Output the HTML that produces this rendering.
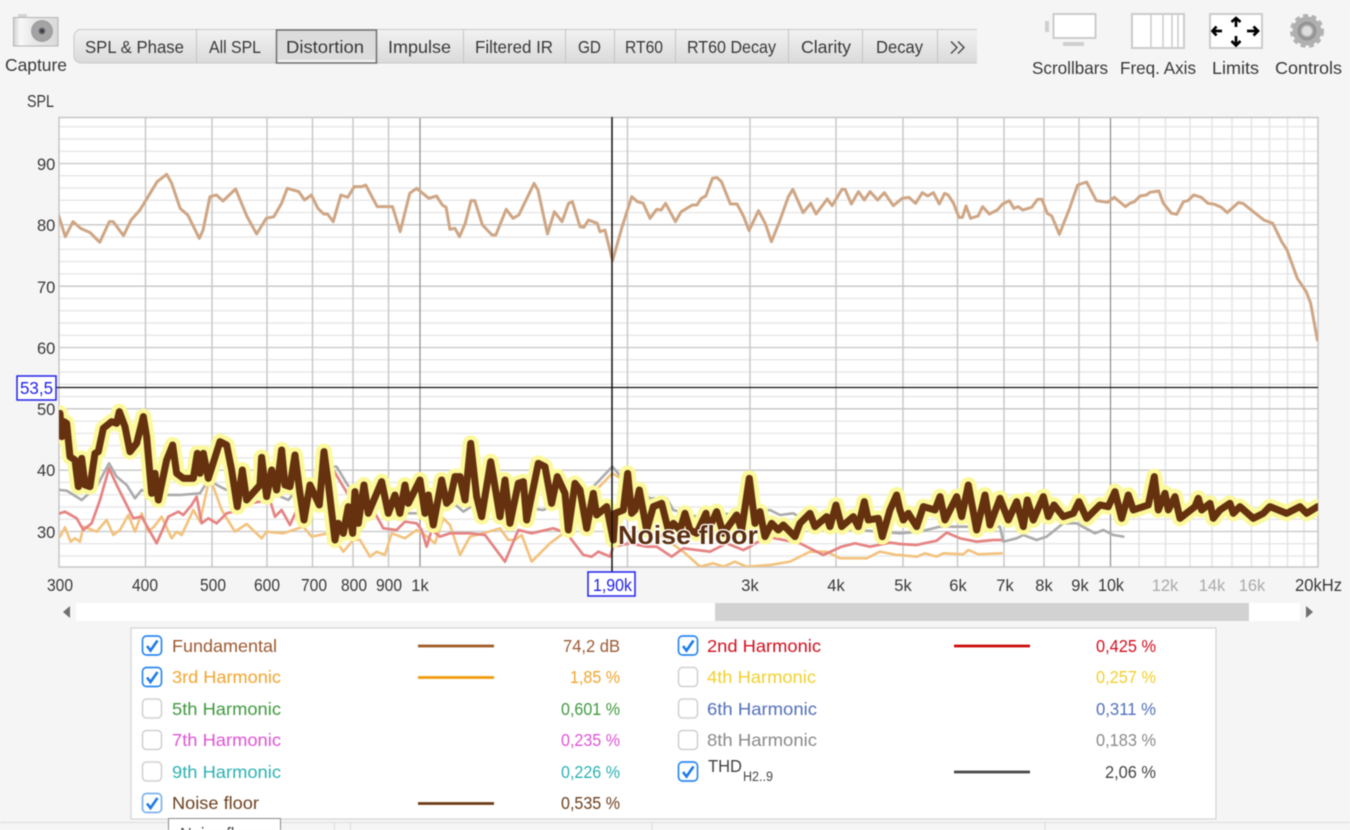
<!DOCTYPE html>
<html><head><meta charset="utf-8"><style>
html,body{margin:0;padding:0;background:#f5f5f5;width:1350px;height:830px;overflow:hidden}
svg{display:block;filter:blur(.5px)}
text{font-family:"Liberation Sans",sans-serif;font-size:16.5px;fill:#383838}
text[textLength]{font-size:17.5px}
.c{text-anchor:middle}
.n{vector-effect:non-scaling-stroke;fill:none;stroke-linejoin:round;stroke-linecap:round}
</style></head><body>
<svg width="1350" height="830" viewBox="0 0 1350 830" xmlns="http://www.w3.org/2000/svg">
<defs>
<linearGradient id="tab" x1="0" y1="0" x2="0" y2="1"><stop offset="0" stop-color="#f2f2f2"/><stop offset="1" stop-color="#dadada"/></linearGradient>
<linearGradient id="cam" x1="0" y1="0" x2="1" y2="0"><stop offset="0" stop-color="#d0d0d0"/><stop offset=".15" stop-color="#f8f8f8"/><stop offset=".45" stop-color="#e8e8e8"/><stop offset="1" stop-color="#dadada"/></linearGradient>
<radialGradient id="lens"><stop offset="0" stop-color="#2d2d35"/><stop offset=".18" stop-color="#50515a"/><stop offset=".38" stop-color="#a6a6a6"/><stop offset="1" stop-color="#a0a0a0"/></radialGradient>
<clipPath id="plot"><rect x="59" y="117" width="1259" height="450"/></clipPath>
<g id="noise">
<polyline class="n" transform="translate(0,370) scale(.3333)" points="180,130 185,200 192,155 200,160 210,260 225,270 235,350 245,265 255,345 270,350 285,250 295,245 310,175 335,155 350,160 358,125 375,170 390,245 410,220 430,140 440,200 455,370 465,310 475,390 500,270 518,225 530,310 550,325 580,325 592,250 600,310 610,250 625,325 660,215 680,225 695,300 712,410 727,300 740,390 780,345 785,262 800,380 815,300 830,360 845,240 855,345 870,350 885,255 900,370 912,450 930,345 958,405 972,245 985,340 1005,510 1015,460 1030,490 1045,410 1058,490 1065,365 1075,460 1092,345 1105,430 1145,335 1165,430 1185,375 1200,430 1215,345 1225,400 1260,330 1275,430 1285,375 1300,465 1325,330 1340,400 1350,390"/>
<polyline class="n" transform="translate(450,370) scale(.3333)" points="0,390 15,320 30,320 45,390 62,220 80,380 95,440 122,275 130,320 150,440 165,330 180,460 205,340 220,335 230,450 265,280 285,290 305,400 322,320 345,370 355,480 375,340 390,360 410,475 430,370 440,435 470,410 490,510 495,430 520,420 533,310 545,430 555,420 568,360 590,480 610,410 635,400 655,480 670,460 690,480 705,430 720,480 740,490 768,430 775,480 800,425 820,490 860,435 875,480 898,325 915,460 930,425 945,500 965,460 985,480 1000,465 1035,500 1050,460 1080,430 1095,470 1130,440 1140,470 1158,405 1175,470 1210,440 1225,470 1243,395 1255,450 1285,445 1297,500 1320,420 1340,375 1350,420"/>
<polyline class="n" transform="translate(900,370) scale(.3333)" points="0,420 10,450 25,430 50,470 70,410 105,420 120,380 135,450 170,380 185,440 205,345 230,480 255,375 270,465 300,385 325,450 350,395 370,470 382,390 400,450 430,380 445,440 462,405 490,440 520,430 537,395 560,445 600,405 625,410 645,365 665,445 685,375 700,420 745,405 763,320 775,420 795,370 805,420 825,380 840,445 885,410 895,385 905,420 930,400 940,445 960,420 990,400 1000,430 1020,410 1060,445 1090,430 1110,410 1160,430 1200,410 1220,430 1253,410"/>
</g>
</defs>

<rect width="1350" height="830" fill="#f5f5f5"/>

<!-- camera -->
<rect x="18" y="14" width="9" height="4" fill="#d4d4d4"/>
<rect x="13.5" y="17.5" width="44.5" height="28.5" fill="url(#cam)" stroke="#b4b4b4"/>
<circle cx="42" cy="31" r="11" fill="url(#lens)"/>
<text x="5" y="71" textLength="62" lengthAdjust="spacingAndGlyphs">Capture</text>

<!-- tabs -->
<path d="M977 29.500H81a7 7 0 0 0-7 7V56a7 7 0 0 0 7 7H977" fill="url(#tab)" stroke="#c8c8c8"/>
<rect x="276.500" y="30" width="100" height="33" fill="#dcdcdc" stroke="#707070" stroke-width="1.5"/>
<rect x="278" y="60" width="97" height="2" fill="#f5f5f5"/>
<path d="M196.500 30V63M463.500 30V63M565.500 30V63M614.500 30V63M675.500 30V63M788.500 30V63M862.500 30V63M937.500 30V63" stroke="#c4c4c4" fill="none"/>
<text x="85" y="53" textLength="99" lengthAdjust="spacingAndGlyphs">SPL &amp; Phase</text>
<text x="209" y="53" textLength="52" lengthAdjust="spacingAndGlyphs">All SPL</text>
<text x="286" y="53" textLength="78" lengthAdjust="spacingAndGlyphs">Distortion</text>
<text x="388" y="53" textLength="63" lengthAdjust="spacingAndGlyphs">Impulse</text>
<text x="475" y="53" textLength="78" lengthAdjust="spacingAndGlyphs">Filtered IR</text>
<text x="578" y="53" textLength="23" lengthAdjust="spacingAndGlyphs">GD</text>
<text x="625" y="53" textLength="38" lengthAdjust="spacingAndGlyphs">RT60</text>
<text x="687" y="53" textLength="89" lengthAdjust="spacingAndGlyphs">RT60 Decay</text>
<text x="801" y="53" textLength="50" lengthAdjust="spacingAndGlyphs">Clarity</text>
<text x="876" y="53" textLength="47" lengthAdjust="spacingAndGlyphs">Decay</text>
<path d="M951 41.500l6 6-6 6M958 41.500l6 6-6 6" fill="none" stroke="#444" stroke-width="1.400"/>

<!-- right icons -->
<rect x="1045" y="21" width="4" height="11" fill="#cfcfcf"/>
<rect x="1053.500" y="14" width="42" height="24" fill="#fff" stroke="#ccc" stroke-width="2"/>
<rect x="1063" y="42" width="21" height="4" fill="#cfcfcf"/>
<rect x="1132" y="14" width="52" height="34" fill="#fff" stroke="#ccc" stroke-width="2"/>
<path d="M1151 14V48M1163 14V48M1172 14V48M1178 14V48" stroke="#ccc" stroke-width="1.500"/>
<rect x="1210" y="14" width="52" height="34" fill="#fff" stroke="#ccc" stroke-width="2"/>
<g stroke="#000" stroke-width="2.700" fill="none">
<path d="M1213 31H1222M1216.500 26.500L1212.500 31L1216.500 35.500"/>
<path d="M1247 31H1257M1253.500 26.500L1258 31L1253.500 35.500"/>
<path d="M1236 18V27M1231.500 22L1236 18L1240.500 22"/>
<path d="M1236 36V45M1231.500 41L1236 45.500L1240.500 41"/>
</g>
<circle cx="1307" cy="31" r="14.500" fill="#b0b0b0"/>
<circle cx="1307" cy="31" r="15.500" fill="none" stroke="#b2b2b2" stroke-width="3" stroke-dasharray="5 3.620"/>
<circle cx="1307" cy="31" r="8" fill="none" stroke="#949494" stroke-width="3"/>
<circle cx="1307" cy="31" r="5" fill="#dedede"/>
<text x="1032" y="74" textLength="76" lengthAdjust="spacingAndGlyphs">Scrollbars</text>
<text x="1120" y="74" textLength="76" lengthAdjust="spacingAndGlyphs">Freq. Axis</text>
<text x="1212" y="74" textLength="47" lengthAdjust="spacingAndGlyphs">Limits</text>
<text x="1275" y="74" textLength="67" lengthAdjust="spacingAndGlyphs">Controls</text>

<text x="27" y="107" textLength="27" lengthAdjust="spacingAndGlyphs">SPL</text>

<!-- plot -->
<rect x="59" y="117" width="1259" height="450" fill="#fff"/>
<path stroke="#e9e9e9" stroke-width="1.500" fill="none" d="M59 126.700H1318M59 139H1318M59 151.200H1318M59 175.800H1318M59 188H1318M59 200.300H1318M59 212.600H1318M59 237.100H1318M59 249.400H1318M59 261.600H1318M59 273.900H1318M59 298.400H1318M59 310.700H1318M59 323H1318M59 335.200H1318M59 359.800H1318M59 372H1318M59 384.300H1318M59 396.600H1318M59 421.100H1318M59 433.400H1318M59 445.600H1318M59 457.900H1318M59 482.400H1318M59 494.700H1318M59 507H1318M59 519.200H1318M59 543.800H1318M59 556H1318"/>
<path stroke="#e4e4e4" stroke-width="1.500" fill="none" d="M1139 117V567M1165.500 117V567M1190 117V567M1212 117V567M1232 117V567M1251.500 117V567M1269.500 117V567M1287.500 117V567M1304 117V567"/>
<path stroke="#c6c6c6" stroke-width="1.300" fill="none" d="M59 163.500H1318M59 224.800H1318M59 286.200H1318M59 347.500H1318M59 408.800H1318M59 470.200H1318M59 531.500H1318"/>
<path stroke="#c6c6c6" stroke-width="1.400" fill="none" d="M145.500 117V567M212 117V567M267 117V567M312.500 117V567M353 117V567M388.500 117V567M627.500 117V567M750 117V567M836 117V567M903 117V567M957.500 117V567M1004 117V567M1044 117V567M1079 117V567"/>
<path stroke="#8c8c8c" stroke-width="1.200" fill="none" d="M420 117V567M1110.500 117V567"/>
<rect x="59" y="117.500" width="1259" height="449.500" fill="none" stroke="#c6c6c6" stroke-width="1.500"/>

<g clip-path="url(#plot)">
<!-- fundamental -->
<g stroke="#cfa685" stroke-width="3">
<polyline class="n" transform="translate(50,110) scale(.3827,.3333)" points="22,315 40,380 60,335 80,355 105,368 130,397 155,335 165,335 192,377 212,330 235,300 280,215 305,193 318,220 340,295 360,315 390,385 400,360 418,260 435,255 452,273 485,237 515,320 540,372 565,325 585,320 605,280 620,235 650,245 665,270 683,255 700,295 715,312 725,312 740,335 760,255 778,262 795,230 815,230 825,225 855,290 895,290 915,365 940,250 958,235 990,265 1010,258 1025,285 1035,292 1045,358 1058,355 1070,380 1085,340 1100,272 1110,272 1130,345 1155,375 1165,375 1192,298 1210,325 1225,315 1265,220 1275,240 1300,372 1318,305 1338,335 1355,280 1365,275 1385,350 1395,352 1407,330 1430,340 1437,365 1450,360 1470,452 1495,350 1520,260 1535,275 1550,280 1568,325"/>
<polyline class="n" transform="translate(650,110) scale(.4464,.3333)" points="0,325 15,298 25,300 35,280 57,335 70,305 95,285 105,285 115,265 125,258 140,205 150,203 160,215 180,282 195,282 210,320 222,362 243,302 258,340 272,395 290,335 310,260 320,238 343,308 360,280 372,312 397,267 408,287 430,238 437,238 451,282 467,245 480,270 493,245 510,270 525,248 545,287 565,265 580,262 595,280 610,248 622,258 635,248 648,282 660,250 668,255 680,280 692,322 700,322 708,288 718,325 735,318 745,290 760,312 778,300 790,282 805,272 815,295 825,290 835,300 855,292 868,268 878,268 890,310 900,318 917,373 940,295 958,225 978,216 1000,272 1025,277 1040,262 1065,290 1075,280 1085,275 1098,258 1112,255 1120,247 1140,243 1150,280 1168,310 1180,313 1195,275 1205,272 1218,255 1235,262 1250,280 1265,283 1280,292 1293,308 1318,278 1328,280 1375,330 1395,340 1415,395 1427,420 1450,505 1470,545 1480,580 1495,690"/>
</g>
<!-- orange -->
<g stroke="#f3c27d" stroke-width="2.600">
<polyline class="n" transform="translate(0,370) scale(.3333)" points="180,500 195,472 212,515 225,505 240,515 250,470 290,485 320,450 340,495 360,480 385,435 405,485 425,430 445,485 462,470 485,440 515,505 530,485 545,495 580,420 600,455 625,340 640,350 665,420 705,485 740,462 785,505 800,485 850,490 910,470 935,500 985,490 1000,500 1030,545 1060,510 1080,510 1110,560 1130,545 1155,555 1175,490 1215,505 1250,480 1275,495 1305,520 1330,445 1350,465"/>
<polyline class="n" transform="translate(450,370) scale(.3333)" points="0,465 30,555 60,500 100,490 150,475 175,510 195,510 215,495 245,575 300,520 340,490 370,450 400,400 487,310 520,330 600,470 650,510 700,545 750,590 790,580 820,590 855,575 890,590 960,585 1020,575 1080,545 1130,545 1170,565 1250,565 1290,545 1340,555 1350,555"/>
<polyline class="n" transform="translate(900,370) scale(.3333)" points="0,555 50,560 75,550 110,560 130,550 190,553 205,540 235,553 305,550"/>
</g>
<!-- red -->
<g stroke="#e58383" stroke-width="2.700">
<polyline class="n" transform="translate(0,370) scale(.3333)" points="180,430 195,425 230,445 250,480 275,460 300,390 327,295 350,345 375,395 400,445 425,440 470,520 505,440 535,425 550,435 575,405 590,380 605,460 625,445 650,460 680,430 700,425 750,400 810,390 825,440 845,420 870,465 890,420 950,370 1000,300 1030,350 1060,400 1120,420 1150,475 1190,480 1215,455 1250,460 1265,480 1280,530 1295,480 1320,500 1350,490"/>
<polyline class="n" transform="translate(450,370) scale(.3333)" points="0,490 20,490 60,490 105,495 165,575 205,480 245,490 310,475 350,490 400,555 425,560 445,545 480,560 490,530 540,520 590,530 620,530 665,560 700,535 780,545 830,520 880,540 900,530 950,500 1000,510 1050,520 1120,555 1175,530 1215,520 1260,530 1320,518 1350,522"/>
<polyline class="n" transform="translate(900,370) scale(.3333)" points="0,522 50,525 110,512 140,488 180,505 230,515 280,510 305,510"/>
</g>
<!-- grey -->
<g stroke="#ababab" stroke-width="2.600">
<polyline class="n" transform="translate(0,370) scale(.3333)" points="180,360 200,362 245,390 290,350 327,280 350,320 380,345 405,385 425,360 440,365 470,375 510,375 540,375 600,370 625,330 660,350 690,365 712,400 770,380 830,375 865,390 890,360 950,320 990,290 1010,290 1040,340 1080,400 1130,400 1165,430 1250,430 1350,400"/>
<polyline class="n" transform="translate(450,370) scale(.3333)" points="0,390 40,425 80,400 200,410 280,420 300,410 350,400 430,350 487,290 530,340 600,385 650,385 670,420 740,440 850,430 960,420 990,435 1030,430 1100,470 1350,490"/>
<polyline class="n" transform="translate(900,370) scale(.3333)" points="0,490 60,485 120,470 170,470 300,470 310,515 350,505 370,495 410,510 440,500 490,460 530,460 585,490 610,480 640,495 670,500"/>
</g>
<!-- noise -->
<use href="#noise" fill="none" stroke="#fbf99b" stroke-width="16"/>
<use href="#noise" fill="none" stroke="#65310f" stroke-width="7"/>
</g>

<!-- crosshair -->
<path d="M56 387.500H1318" stroke="#111" stroke-width="1.300"/>
<path d="M612 117V572" stroke="#111" stroke-width="1.500"/>

<text x="618" y="544" textLength="140" lengthAdjust="spacingAndGlyphs" style="font-weight:bold;font-size:26px;fill:#5a2e10;stroke:#fff;stroke-width:2.500px;paint-order:stroke;stroke-linejoin:round">Noise floor</text>

<!-- y axis -->
<text x="37" y="170">90</text><text x="37" y="231">80</text><text x="37" y="293">70</text><text x="37" y="354">60</text><text x="37" y="415">50</text><text x="37" y="476">40</text><text x="37" y="538">30</text>
<rect x="17" y="376" width="39" height="24" fill="#fff" stroke="#2222ee" stroke-width="1.500"/>
<text x="20" y="394" textLength="33" lengthAdjust="spacingAndGlyphs" style="fill:#2222ee">53,5</text>

<!-- x axis -->
<g class="c">
<text class="c" x="60" y="591" textLength="26" lengthAdjust="spacingAndGlyphs">300</text><text class="c" x="145" y="591" textLength="26" lengthAdjust="spacingAndGlyphs">400</text><text class="c" x="213" y="591" textLength="26" lengthAdjust="spacingAndGlyphs">500</text><text class="c" x="267" y="591" textLength="26" lengthAdjust="spacingAndGlyphs">600</text><text class="c" x="314" y="591" textLength="26" lengthAdjust="spacingAndGlyphs">700</text><text class="c" x="354" y="591" textLength="26" lengthAdjust="spacingAndGlyphs">800</text><text class="c" x="389" y="591" textLength="26" lengthAdjust="spacingAndGlyphs">900</text><text class="c" x="420" y="591">1k</text>
<text class="c" x="750" y="591">3k</text><text class="c" x="836" y="591">4k</text><text class="c" x="903" y="591">5k</text><text class="c" x="958" y="591">6k</text><text class="c" x="1005" y="591">7k</text><text class="c" x="1044" y="591">8k</text><text class="c" x="1080" y="591">9k</text><text class="c" x="1111" y="591" textLength="26" lengthAdjust="spacingAndGlyphs">10k</text>
<text class="c" x="1165" y="591" style="fill:#aaa">12k</text><text class="c" x="1212" y="591" style="fill:#aaa">14k</text><text class="c" x="1252" y="591" style="fill:#aaa">16k</text>
</g>
<text x="1295" y="591" textLength="47" lengthAdjust="spacingAndGlyphs">20kHz</text>
<rect x="588" y="572" width="47" height="24" fill="#fff" stroke="#2222ee" stroke-width="1.500"/>
<text x="593" y="591" textLength="39" lengthAdjust="spacingAndGlyphs" style="fill:#2222ee">1,90k</text>

<!-- scrollbar -->
<rect x="76" y="603" width="1224" height="18" fill="#fff"/>
<rect x="715" y="603" width="534" height="18" fill="#d2d2d2"/>
<path d="M70 606V618L63 612zM1306 606V618L1313 612z" fill="#6f6f6f"/>

<!-- legend -->
<rect x="131" y="628" width="1085" height="191" fill="#fff" stroke="#d4d4d4" stroke-width="1.200"/>
<g fill="#fff" stroke="#d0d0d0" stroke-width="1.500">
<rect x="142.500" y="699" width="19" height="19" rx="4"/><rect x="142.500" y="730.500" width="19" height="19" rx="4"/><rect x="142.500" y="762" width="19" height="19" rx="4"/>
<rect x="678.500" y="667.500" width="19" height="19" rx="4"/><rect x="678.500" y="699" width="19" height="19" rx="4"/><rect x="678.500" y="730.500" width="19" height="19" rx="4"/>
</g>
<g fill="#fff" stroke="#2b88f0" stroke-width="1.700">
<rect x="142.500" y="636" width="19" height="19" rx="4"/><rect x="142.500" y="667.500" width="19" height="19" rx="4"/>
<rect x="678.500" y="636" width="19" height="19" rx="4"/><rect x="678.500" y="762" width="19" height="19" rx="4"/>
</g>
<rect x="142.500" y="793.500" width="19" height="19" rx="4" fill="#fff" stroke="#7fb2ea" stroke-width="1.700"/>
<g fill="none" stroke="#1f7ae8" stroke-width="2.600">
<path d="M147 646l3.500 4.500 7-10"/><path d="M147 677.500l3.500 4.500 7-10"/><path d="M147 803.500l3.500 4.500 7-10"/>
<path d="M683 646l3.500 4.500 7-10"/><path d="M683 772l3.500 4.500 7-10"/>
</g>

<text x="172" y="652" textLength="105" lengthAdjust="spacingAndGlyphs" style="fill:#9c5a33">Fundamental</text>
<text x="172" y="683" textLength="109" lengthAdjust="spacingAndGlyphs" style="fill:#f2a52e">3rd Harmonic</text>
<text x="172" y="715" textLength="109" lengthAdjust="spacingAndGlyphs" style="fill:#3f9a3f">5th Harmonic</text>
<text x="172" y="746" textLength="109" lengthAdjust="spacingAndGlyphs" style="fill:#df55d3">7th Harmonic</text>
<text x="172" y="778" textLength="109" lengthAdjust="spacingAndGlyphs" style="fill:#2db2b2">9th Harmonic</text>
<text x="172" y="809" textLength="87" lengthAdjust="spacingAndGlyphs" style="fill:#6d4020">Noise floor</text>
<path d="M418 646H494" stroke="#a05a24" stroke-width="2.800"/>
<path d="M418 677.500H494" stroke="#f09a0a" stroke-width="2.800"/>
<path d="M418 803.500H494" stroke="#6d3a12" stroke-width="2.800"/>
<text x="563" y="652" textLength="57" lengthAdjust="spacingAndGlyphs" style="fill:#9c5a33">74,2 dB</text>
<text x="570" y="683" textLength="50" lengthAdjust="spacingAndGlyphs" style="fill:#f2a52e">1,85 %</text>
<text x="561" y="715" textLength="59" lengthAdjust="spacingAndGlyphs" style="fill:#3f9a3f">0,601 %</text>
<text x="561" y="746" textLength="59" lengthAdjust="spacingAndGlyphs" style="fill:#df55d3">0,235 %</text>
<text x="561" y="778" textLength="59" lengthAdjust="spacingAndGlyphs" style="fill:#2db2b2">0,226 %</text>
<text x="561" y="809" textLength="59" lengthAdjust="spacingAndGlyphs" style="fill:#6d4020">0,535 %</text>

<text x="707" y="652" textLength="114" lengthAdjust="spacingAndGlyphs" style="fill:#d2101e">2nd Harmonic</text>
<text x="707" y="683" textLength="109" lengthAdjust="spacingAndGlyphs" style="fill:#f2d02e">4th Harmonic</text>
<text x="707" y="715" textLength="110" lengthAdjust="spacingAndGlyphs" style="fill:#5470bd">6th Harmonic</text>
<text x="707" y="746" textLength="110" lengthAdjust="spacingAndGlyphs" style="fill:#8a8a8a">8th Harmonic</text>
<text x="708" y="772" textLength="34" lengthAdjust="spacingAndGlyphs" style="fill:#444">THD</text>
<text x="743" y="781" textLength="30" lengthAdjust="spacingAndGlyphs" style="fill:#444;font-size:13.500px">H2..9</text>
<path d="M954 646H1030" stroke="#cc0a0a" stroke-width="2.800"/>
<path d="M954 772H1030" stroke="#484848" stroke-width="2.800"/>
<text x="1096" y="652" textLength="60" lengthAdjust="spacingAndGlyphs" style="fill:#d2101e">0,425 %</text>
<text x="1096" y="683" textLength="60" lengthAdjust="spacingAndGlyphs" style="fill:#f2d02e">0,257 %</text>
<text x="1096" y="715" textLength="60" lengthAdjust="spacingAndGlyphs" style="fill:#5470bd">0,311 %</text>
<text x="1096" y="746" textLength="60" lengthAdjust="spacingAndGlyphs" style="fill:#8a8a8a">0,183 %</text>
<text x="1105" y="778" textLength="51" lengthAdjust="spacingAndGlyphs" style="fill:#444">2,06 %</text>

<!-- status bar -->
<path d="M0 822.500H1350" stroke="#dcdcdc"/>
<path d="M334.500 822V830M350.500 822V830M652 822V830M1045 822V830" stroke="#d8d8d8"/>
<rect x="168.500" y="818.500" width="112" height="14" fill="#fff" stroke="#8a8a8a"/>
<text x="180" y="840" textLength="78" lengthAdjust="spacingAndGlyphs">Noise floor</text>
</svg>
</body></html>
